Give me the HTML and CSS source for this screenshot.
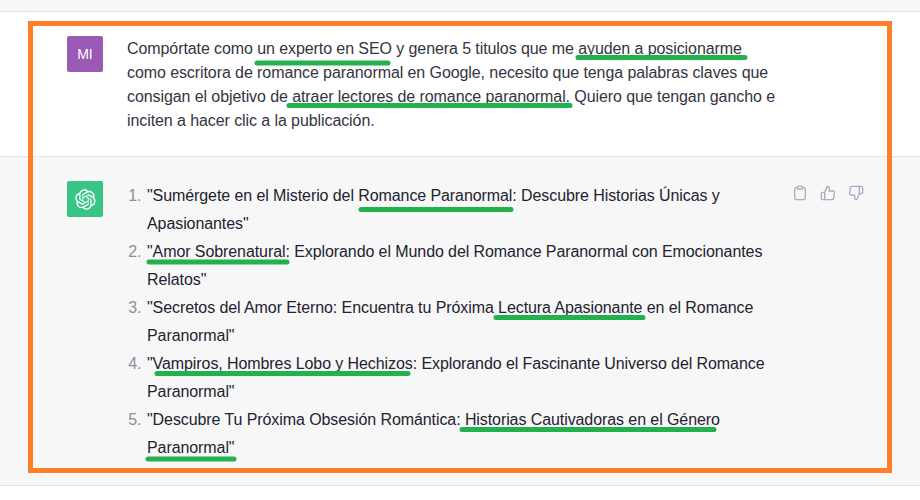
FILE: index.html
```html
<!DOCTYPE html>
<html lang="es">
<head>
<meta charset="utf-8">
<title>Chat</title>
<link rel="stylesheet" href="styles.css">
</head>
<body>
<main class="page">
  <div class="strip"></div>
  <section class="message user">
    <div class="avatar avatar-user">MI</div>
    <p class="prompt">Compórtate como un experto en SEO y genera 5 titulos que me ayuden a posicionarme<br>como escritora de romance paranormal en Google, necesito que tenga palabras claves que<br>consigan el objetivo de atraer lectores de romance paranormal. Quiero que tengan gancho e<br>inciten a hacer clic a la publicación.</p>
  </section>
  <section class="message bot">
    <div class="avatar avatar-bot">
      <svg class="logo" viewBox="0 0 41 41" aria-hidden="true"><path fill="currentColor" d="M37.5324 16.8707C37.9808 15.5241 38.1363 14.0974 37.9886 12.6859C37.8409 11.2744 37.3934 9.91076 36.676 8.68622C35.6126 6.83404 33.9882 5.3676 32.0373 4.4985C30.0864 3.62941 27.9098 3.40259 25.8215 3.85078C24.8796 2.7893 23.7219 1.94125 22.4257 1.36341C21.1295 0.785575 19.7249 0.491269 18.3058 0.500197C16.1708 0.495044 14.0893 1.16803 12.3614 2.42214C10.6335 3.67624 9.34853 5.44666 8.6917 7.47815C7.30085 7.76286 5.98686 8.3414 4.8377 9.17505C3.68854 10.0087 2.73073 11.0782 2.02839 12.312C0.956464 14.1591 0.498905 16.2988 0.721698 18.4228C0.944492 20.5467 1.83612 22.5449 3.268 24.1293C2.81966 25.4759 2.66413 26.9026 2.81182 28.3141C2.95951 29.7256 3.40701 31.0892 4.12437 32.3138C5.18791 34.1659 6.8123 35.6322 8.76321 36.5013C10.7141 37.3704 12.8907 37.5973 14.9789 37.1492C15.9208 38.2107 17.0786 39.0587 18.3747 39.6366C19.6709 40.2144 21.0755 40.5087 22.4946 40.4998C24.6307 40.5054 26.7133 39.8321 28.4418 38.5772C30.1704 37.3223 31.4556 35.5506 32.1119 33.5179C33.5027 33.2332 34.8167 32.6547 35.9659 31.821C37.115 30.9874 38.0728 29.9178 38.7752 28.684C39.8458 26.8371 40.3023 24.6979 40.0789 22.5748C39.8556 20.4517 38.9639 18.4544 37.5324 16.8707ZM22.4978 37.8849C20.7443 37.8874 19.0459 37.2733 17.6994 36.1501C17.7601 36.117 17.8666 36.0586 17.936 36.0161L25.9004 31.4156C26.1003 31.3019 26.2663 31.137 26.3813 30.9378C26.4964 30.7386 26.5563 30.5124 26.5549 30.2825V19.0542L29.9213 20.998C29.9389 21.0068 29.9541 21.0198 29.9656 21.0359C29.977 21.052 29.9842 21.0707 29.9867 21.0902V30.3889C29.9842 32.375 29.1946 34.2791 27.7909 35.6841C26.3872 37.0892 24.4838 37.8806 22.4978 37.8849ZM6.39227 31.0064C5.51397 29.4888 5.19742 27.7107 5.49804 25.9832C5.55718 26.0187 5.66048 26.0818 5.73461 26.1244L13.699 30.7248C13.8975 30.8408 14.1233 30.902 14.3532 30.902C14.583 30.902 14.8088 30.8408 15.0073 30.7248L24.731 25.1103V28.9979C24.7321 29.0177 24.7283 29.0376 24.7199 29.0556C24.7115 29.0736 24.6988 29.0893 24.6829 29.1012L16.6317 33.7497C14.9096 34.7416 12.8643 35.0097 10.9447 34.4954C9.02506 33.9811 7.38785 32.7263 6.39227 31.0064ZM4.29707 13.6194C5.17156 12.0998 6.55279 10.9364 8.19885 10.3327C8.19885 10.4013 8.19491 10.5228 8.19491 10.6071V19.808C8.19351 20.0378 8.25334 20.2638 8.36823 20.4629C8.48312 20.6619 8.64893 20.8267 8.84863 20.9404L18.5723 26.5542L15.206 28.4979C15.1894 28.5089 15.1703 28.5155 15.1505 28.5173C15.1307 28.5191 15.1107 28.516 15.0924 28.5082L7.04046 23.8557C5.32135 22.8601 4.06716 21.2235 3.55289 19.3046C3.03862 17.3858 3.30624 15.3413 4.29707 13.6194ZM31.955 20.0556L22.2312 14.4411L25.5976 12.4981C25.6142 12.4872 25.6333 12.4805 25.6531 12.4787C25.6729 12.4769 25.6928 12.4801 25.7111 12.4879L33.7631 17.1364C34.9967 17.849 36.0017 18.8982 36.6606 20.1613C37.3194 21.4244 37.6047 22.849 37.4832 24.2684C37.3617 25.6878 36.8382 27.0432 35.9743 28.1759C35.1103 29.3086 33.9415 30.1717 32.6047 30.6641C32.6047 30.5947 32.6047 30.4733 32.6047 30.3889V21.188C32.6066 20.9586 32.5474 20.7328 32.4332 20.5338C32.319 20.3348 32.154 20.1698 31.955 20.0556ZM35.3055 15.0128C35.2464 14.9765 35.1431 14.9142 35.069 14.8717L27.1045 10.2712C26.906 10.1554 26.6803 10.0943 26.4504 10.0943C26.2206 10.0943 25.9948 10.1554 25.7963 10.2712L16.0726 15.8858V11.9982C16.0715 11.9783 16.0753 11.9585 16.0837 11.9405C16.0921 11.9225 16.1048 11.9068 16.1207 11.8949L24.1719 7.25025C25.4053 6.53903 26.8158 6.19376 28.2383 6.25482C29.6608 6.31589 31.0364 6.78077 32.2044 7.59508C33.3723 8.40939 34.2842 9.53945 34.8334 10.8531C35.3826 12.1667 35.5464 13.6095 35.3055 15.0128ZM14.2424 21.9419L10.8752 19.9981C10.8576 19.9893 10.8423 19.9763 10.8309 19.9602C10.8195 19.9441 10.8122 19.9254 10.8098 19.9058V10.6071C10.8107 9.18295 11.2173 7.78848 11.9819 6.58696C12.7466 5.38544 13.8377 4.42659 15.1275 3.82264C16.4173 3.21869 17.8524 2.99464 19.2649 3.1767C20.6775 3.35876 22.0089 3.93941 23.1034 4.85067C23.0427 4.88379 22.937 4.94215 22.8668 4.98473L14.9024 9.58517C14.7025 9.69878 14.5366 9.86356 14.4215 10.0626C14.3065 10.2616 14.2466 10.4877 14.2479 10.7175L14.2424 21.9419ZM16.071 17.9991L20.4018 15.4978L24.7325 17.9975V22.9985L20.4018 25.4983L16.071 22.9985V17.9991Z"/></svg>
    </div>
    <ol class="titles">
      <li>"Sumérgete en el Misterio del Romance Paranormal: Descubre Historias Únicas y<br>Apasionantes"</li>
      <li>"Amor Sobrenatural: Explorando el Mundo del Romance Paranormal con Emocionantes<br>Relatos"</li>
      <li>"Secretos del Amor Eterno: Encuentra tu Próxima Lectura Apasionante en el Romance<br>Paranormal"</li>
      <li>"Vampiros, Hombres Lobo y Hechizos: Explorando el Fascinante Universo del Romance<br>Paranormal"</li>
      <li>"Descubre Tu Próxima Obsesión Romántica: Historias Cautivadoras en el Género<br>Paranormal"</li>
    </ol>
    <div class="actions">
      <svg class="action" viewBox="0 0 24 24" aria-hidden="true"><path d="M16 4h2a2 2 0 0 1 2 2v14a2 2 0 0 1-2 2H6a2 2 0 0 1-2-2V6a2 2 0 0 1 2-2h2"/><rect x="8" y="2" width="8" height="4" rx="1"/></svg>
      <svg class="action" viewBox="0 0 24 24" aria-hidden="true"><path d="M14 9V5a3 3 0 0 0-3-3l-4 9v11h11.28a2 2 0 0 0 2-1.7l1.38-9a2 2 0 0 0-2-2.3zM7 22H4a2 2 0 0 1-2-2v-7a2 2 0 0 1 2-2h3"/></svg>
      <svg class="action" viewBox="0 0 24 24" aria-hidden="true"><path d="M10 15v4a3 3 0 0 0 3 3l4-9V2H5.72a2 2 0 0 0-2 1.7l-1.38 9a2 2 0 0 0 2 2.3zm7-13h2.67A2.31 2.31 0 0 1 22 4v7a2.31 2.31 0 0 1-2.33 2H17"/></svg>
    </div>
  </section>
  <svg class="marks" viewBox="0 0 920 500" aria-hidden="true">
    <path d="M257 63H388M578 57.500H745M289 105.500H570M361 209.500H511M149 262H287M496 317.500H643M157 373.500H408M462 429.500H714M148 459H234"/>
  </svg>
  <div class="frame"></div>
</main>
</body>
</html>
```

FILE: styles.css
```css
* {
  box-sizing: border-box;
}

html,
body {
  margin: 0;
  padding: 0;
  background: #ffffff;
}

.page {
  position: relative;
  width: 920px;
  height: 500px;
  overflow: hidden;
  font-family: "Liberation Sans", Arial, sans-serif;
  font-size: 16px;
  letter-spacing: -0.085px;
  color: #343541;
}

.strip {
  height: 12px;
  background: #f7f7f8;
  border-bottom: 1px solid #e5e5e5;
}

.message {
  display: flex;
  gap: 24px;
  padding: 24px 56px 24px 67px;
  border-bottom: 1px solid #e5e5e5;
}

.user {
  height: 145px;
  background: #ffffff;
}

.bot {
  height: 329px;
  background: #f7f7f8;
}

.avatar {
  flex: none;
  display: flex;
  align-items: center;
  justify-content: center;
  width: 36px;
  height: 36px;
  border-radius: 2px;
  color: #ffffff;
}

.avatar-user {
  background: #9b59b6;
  font-size: 14px;
}

.avatar-bot {
  background: #38c585;
}

.logo {
  width: 21px;
  height: 21px;
}

.prompt {
  margin: 0;
  padding-top: 1px;
  line-height: 24px;
  white-space: nowrap;
}

.titles {
  flex: 1;
  min-width: 0;
  margin: 0;
  padding: 1px 0 0 20px;
  line-height: 28px;
  white-space: nowrap;
  color: #22232e;
}

.titles li::marker {
  content: counter(list-item) ".\00a0\200a";
  color: #8e8ea0;
}

.actions {
  flex: none;
  display: flex;
  gap: 12px;
  margin-top: 4px;
  height: 16px;
}

.action {
  width: 16px;
  height: 16px;
  fill: none;
  stroke: #acacbe;
  stroke-width: 2;
  stroke-linecap: round;
  stroke-linejoin: round;
}

.marks {
  position: absolute;
  inset: 0;
  width: 920px;
  height: 500px;
  fill: none;
  stroke: #22b14c;
  stroke-width: 5;
  stroke-linecap: round;
}

.frame {
  position: absolute;
  left: 28px;
  top: 21px;
  width: 864px;
  height: 452px;
  border: 5px solid #ff7f27;
}
```
